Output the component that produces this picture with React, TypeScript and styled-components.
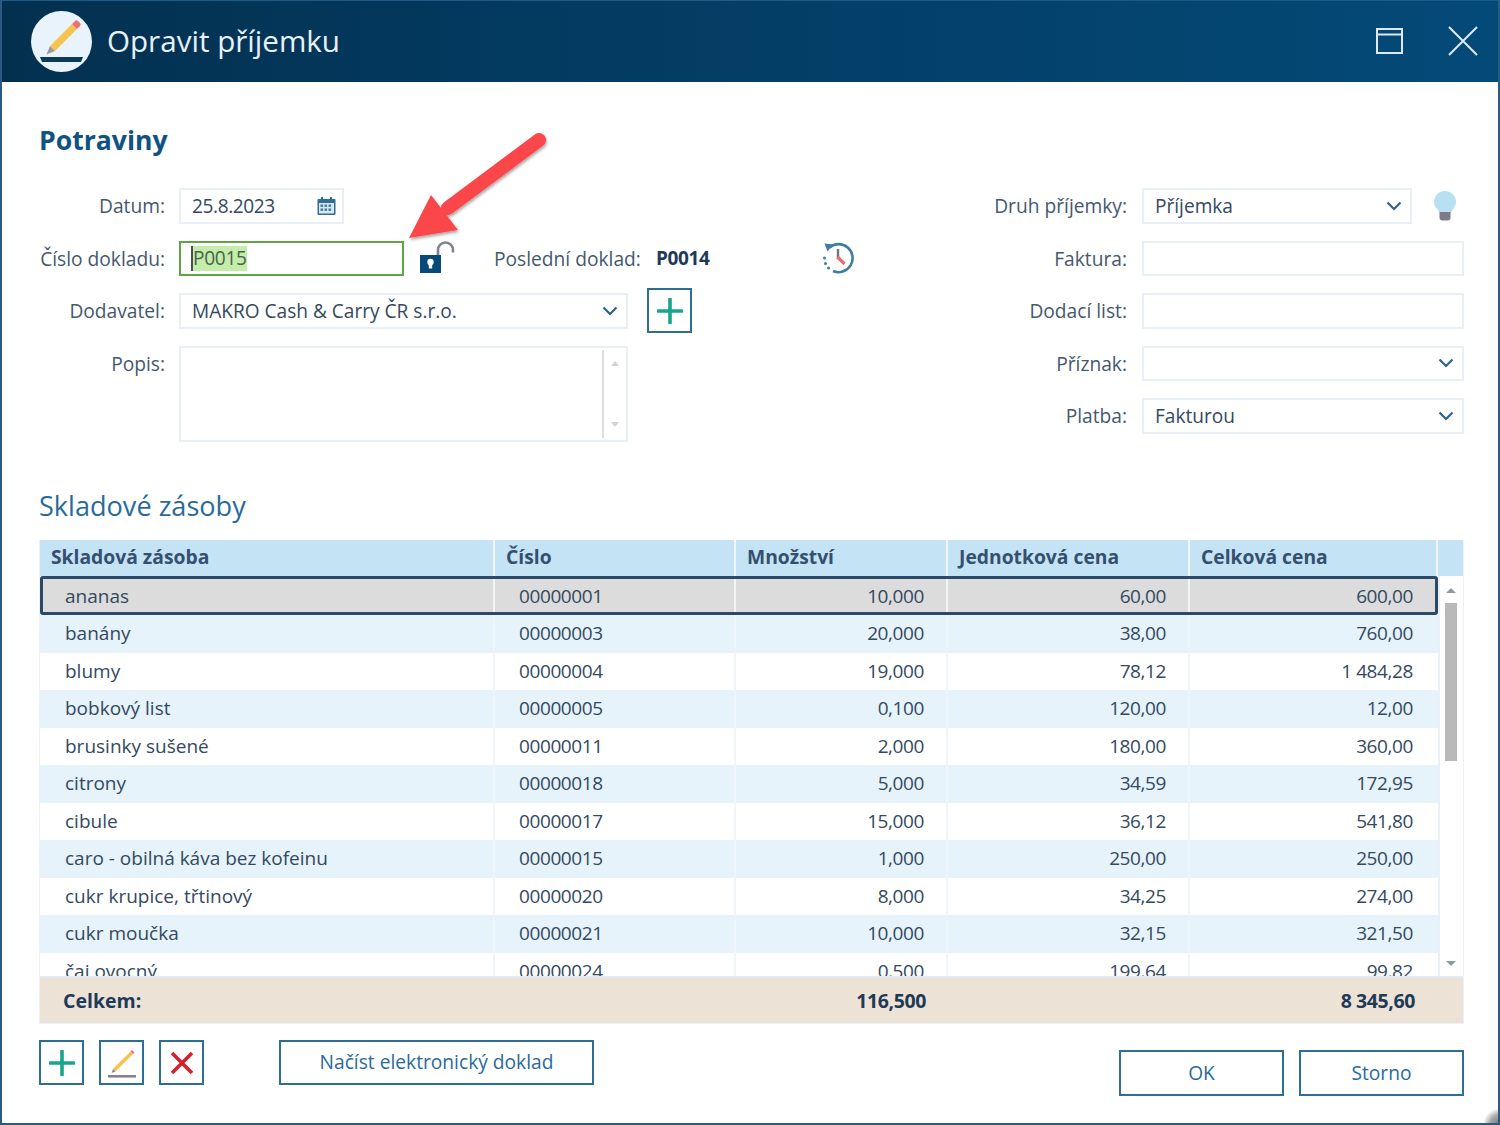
import React from "react";
import styled, { createGlobalStyle } from "styled-components";

const Global = createGlobalStyle`
  html, body { margin: 0; padding: 0; background: #fff; }
  * { box-sizing: border-box; }
  body { font-family: "Open Sans", "Noto Sans", sans-serif; color: #34495f; }
`;

const Win = styled.div`
  position: relative; width: 1500px; height: 1125px; overflow: hidden;
  border: solid #2b5b80; border-width: 0 2px 2px 2px; background: #fff;
  display: flex; flex-direction: column;
`;
const TitleBar = styled.header`
  height: 82px; margin: 0 -2px; flex: none; display: flex; align-items: center; padding: 0 12px 0 31px;
  background: linear-gradient(90deg, #03304f 0%, #033a60 35%, #044a78 100%);
  border-top: 1px solid #1d5a85;
`;
const Logo = styled.div`
  width: 61px; height: 61px; border-radius: 50%; background: #e9f3fb; flex: none; display: flex;
`;
const TitleText = styled.h1`
  margin: -2px 0 0 15px; font-size: 29.6px; font-weight: 400; color: #e8f1f8; flex: 1; line-height: 40px;
`;
const WinButton = styled.button`
  width: 50px; height: 50px; padding: 0; border: 0; background: none; display: flex;
  align-items: center; justify-content: center; margin-left: ${p => p.$gap ?? 23}px; margin-top: -2px;
`;
const Main = styled.main`
  flex: 1; display: flex; flex-direction: column; padding: 0 34px 0 37px; min-height: 0;
`;
const Heading = styled.h2`
  margin: 39px 0 29px 0; font-size: 26.6px; line-height: 38px; font-weight: 700; color: #0f5283;
`;
const FormArea = styled.div`
  display: flex; justify-content: space-between; height: 298px;
`;
const LeftForm = styled.div`
  display: grid; grid-template-columns: 126px 449px 64px auto; grid-auto-rows: min-content;
  column-gap: 14px; row-gap: 17px; align-content: start;
`;
const RightForm = styled.div`
  display: grid; grid-template-columns: 200px 322px; column-gap: 15px; row-gap: 17px;
  grid-auto-rows: 35.5px; align-content: start;
`;
const Label = styled.label`
  font-size: 19.2px; line-height: 36.5px; height: 35.5px; text-align: right; color: #44586e; white-space: nowrap;
`;
const Field = styled.div`
  height: 35.5px; border: 2px solid #e9eff9; background: #fff; display: flex; align-items: center;
  padding: 0 8px 0 11px; font-size: 19.1px; color: #34495f; width: ${p => p.$w ? p.$w + "px" : "100%"};
  justify-content: space-between; white-space: nowrap;
`;
const DateValue = styled.span`
  letter-spacing: -0.4px;
`;
const CalendarBox = styled.span`
  display: flex; margin-right: -2px;
`;
const FocusField = styled(Field)`
  border-color: #5fa544; width: 225px; justify-content: flex-start; position: relative;
`;
const Selected = styled.span`
  background: #c4eda9; color: #4b6150; border-left: 2px solid #44515c; line-height: 25px; height: 25px; display: block;
  letter-spacing: -0.3px; margin-left: -1px;
`;
const DateRow = styled.div`
  grid-column: 2 / 5; display: flex;
`;
const NumberRow = styled.div`
  grid-column: 2 / 5; display: flex; align-items: center; position: relative; height: 35.5px;
`;
const LockWrap = styled.span`
  display: flex; margin-left: 16px; flex: none;
`;
const LastLabel = styled.span`
  font-size: 19.2px; margin-left: 38px; color: #44586e; white-space: nowrap; width: 162px; flex: none;
`;
const LastValue = styled.strong`
  font-size: 19px; font-weight: 700; color: #1f3a57; width: 166px; flex: none; letter-spacing: -0.35px;
`;
const HistoryWrap = styled.span`
  display: flex; margin-left: -1px;
`;
const TextArea = styled.div`
  height: 96px; border: 2px solid #e9eff9; grid-column: 2; position: relative; display: flex; justify-content: flex-end;
`;
const AreaScroll = styled.div`
  width: 24px; margin: 2px 0; border-left: 2px solid #dddddd; position: relative;
`;
const MiniArrow = styled.i`
  position: absolute; left: 7px; width: 0; height: 0; border: 4.5px solid transparent;
  ${p => p.$up ? `top: 11px; border-top: 0; border-bottom: 5px solid #d2d2d2;` : `bottom: 11px; border-bottom: 0; border-top: 5px solid #d2d2d2;`}
`;
const IconButton = styled.button`
  width: 45px; height: 45px; border: 2px solid #2f6d99; background: #fff; padding: 0;
  display: flex; align-items: center; justify-content: center; flex: none;
`;
const LeftPlus = styled.div`
  grid-column: 3 / 5; height: 35.5px; display: flex; align-items: flex-start; margin-left: 5px; margin-top: -5px;
`;
const BulbRow = styled.div`
  display: flex; align-items: center; justify-content: space-between;
`;
const BulbBox = styled.span`
  display: flex; margin-right: 7px;
`;
const Sub = styled.h3`
  margin: 0 0 14px 0; font-size: 27.1px; line-height: 40px; font-weight: 400; color: #2a6a9a;
`;
const Table = styled.div`
  border: 1px solid #eaf1fa; border-top: 0; display: flex; flex-direction: column; height: 484px; width: 1425px;
`;
const HeadRow = styled.div`
  display: grid; grid-template-columns: 455px 241px 212px 242px 248px 1fr; height: 36px; background: #c4e3f5; flex: none;
`;
const HeadCell = styled.div`
  font-size: 19.3px; font-weight: 700; line-height: 33px; padding-left: 11px; color: #35506f;
  border-right: 2px solid #f0f6fb; white-space: nowrap;
  &:last-child { border-right: 0; padding: 0; }
`;
const BodyWrap = styled.div`
  flex: 1; min-height: 0; display: flex; overflow: hidden; border-bottom: 2px solid #e4eaf1;
`;
const Rows = styled.div`
  width: 1398px; flex: none; overflow: hidden;
`;
const Row = styled.div`
  display: grid; grid-template-columns: 455px 241px 212px 242px 248px; height: 37.5px;
  background: ${p => p.$sel ? "#dcdcdc" : p.$alt ? "#e6f3fb" : "#fff"};
  ${p => p.$sel ? `outline: 3px solid #2b4a68; outline-offset: -3px; border-radius: 3px; height: 39px;` : ""}
`;
const Cell = styled.div`
  font-size: 19px; line-height: ${p => p.$sel ? 40 : 37.5}px; color: #34495f; white-space: nowrap;
  border-right: 2px solid ${p => p.$sel ? "#f4f4f4" : "#f0f5fa"};
  text-align: ${p => p.$num ? "right" : "left"};
  letter-spacing: ${p => p.$digits ? "-0.4px" : "0"};
  padding: ${p => p.$num ? `0 ${p.$last ? 25 : 22}px 0 0` : `0 0 0 ${p.$digits ? 24 : 25}px`};
  &:last-child { border-right: 0; }
`;
const Scroll = styled.div`
  flex: 1; border-left: 2px solid #eaf0f8; position: relative; padding-top: 27px;
`;
const Thumb = styled.div`
  width: 12px; height: 158px; background: #b9b9b9; margin-left: 5px;
`;
const ScrollArrow = styled.i`
  position: absolute; left: 6px; width: 0; height: 0; border: 5px solid transparent;
  ${p => p.$up ? `top: 12px; border-top: 0; border-bottom: 5px solid #8e9aa6;` : `bottom: 10px; border-bottom: 0; border-top: 5px solid #8e9aa6;`}
`;
const Total = styled.div`
  display: grid; grid-template-columns: 455px 241px 212px 242px 248px 1fr; height: 45px; background: #ece3d6; flex: none;
`;
const TotalCell = styled.div`
  font-size: 19.5px; font-weight: 700; line-height: 45px; color: #1f3a57; white-space: nowrap;
  text-align: ${p => p.$num ? "right" : "left"};
  letter-spacing: ${p => p.$num ? "-0.4px" : "0"};
  padding: ${p => p.$num ? `0 ${p.$pr}px 0 0` : "0 0 0 23px"};
`;
const Footer = styled.footer`
  display: flex; align-items: flex-start; margin-top: 16px;
`;
const ToolGroup = styled.div`
  display: flex; gap: 15px;
`;
const LoadButton = styled.button`
  margin-left: 75px; width: 315px; height: 45px; border: 2px solid #2f6d99; background: #fff;
  font: 400 19.2px "Open Sans", sans-serif; color: #2a6a9a; line-height: 40px; padding: 0 0 1px;
`;
const ActionGroup = styled.div`
  margin-left: auto; display: flex; gap: 15px; margin-top: 10px;
`;
const ActionButton = styled.button`
  width: 165px; height: 46px; border: 2px solid #2f6d99; background: #fff;
  font: 400 19.2px "Open Sans", sans-serif; color: #2a6a9a; padding: 0 0 1px;
`;
const ArrowOverlay = styled.svg`
  position: absolute; left: 393px; top: 120px; pointer-events: none;
`;
const CornerShade = styled.div`
  position: absolute; right: -2px; bottom: -2px; width: 16px; height: 16px;
  background: radial-gradient(circle at 100% 100%, #6f6f6f 0%, #a9a9a9 45%, rgba(255,255,255,0) 75%);
`;

const Chevron = () => (
  <svg width="16" height="10" viewBox="0 0 16 10"><path d="M1.5 1.5 8 8l6.5-6.5" fill="none" stroke="#2f6288" strokeWidth="2.2" /></svg>
);
const Plus = () => (
  <svg width="26" height="26" viewBox="0 0 26 26"><path d="M13 1v24M1 13h24" stroke="#17a58c" strokeWidth="3.6" strokeLinecap="round" /></svg>
);
const Calendar = () => (
  <svg width="19" height="18" viewBox="0 0 19 18">
    <rect x="0.5" y="2" width="18" height="16" rx="1" fill="#2f6d99" />
    <rect x="2" y="6" width="15" height="10.5" fill="#d9e7f2" />
    <rect x="4" y="0" width="2" height="3.5" fill="#2f6d99" /><rect x="13" y="0" width="2" height="3.5" fill="#2f6d99" />
    {[3.5, 7.5, 11.5].map(x => [7.5, 11.5].map(y => <rect key={x + "-" + y} x={x} y={y} width="2.6" height="2.4" fill="#3f7aa4" />))}
  </svg>
);
const Lock = () => (
  <svg width="36" height="34" viewBox="0 0 36 34">
    <path d="M18 16V9a7.5 7.5 0 0 1 15 0v2.5" fill="none" stroke="#877f90" strokeWidth="2.6" />
    <rect x="0" y="14" width="21" height="18" fill="#06497a" />
    <circle cx="10.500" cy="21" r="3.2" fill="#fff" /><rect x="8.800" y="21" width="3.4" height="6.5" fill="#fff" />
  </svg>
);
const History = () => (
  <svg width="34" height="34" viewBox="0 0 34 34">
    <path d="M8.5 6.5A14 14 0 1 1 12 30" fill="none" stroke="#3f7ba5" strokeWidth="2.6" />
    <path d="M3.5 2.5 12 3.5 6.5 10.5Z" fill="#3f7ba5" />
    <circle cx="3.5" cy="17" r="1.5" fill="#3f7ba5" /><circle cx="4.5" cy="22.5" r="1.5" fill="#3f7ba5" /><circle cx="7.5" cy="27" r="1.5" fill="#3f7ba5" />
    <path d="M17 8v10" stroke="#6d7480" strokeWidth="2.4" /><path d="M16.5 16l7 7" stroke="#ed6a6e" strokeWidth="3.2" />
  </svg>
);
const Bulb = () => (
  <svg width="24" height="32" viewBox="0 0 24 32">
    <path d="M12 1a11 11 0 0 1 11 11c0 4.5-3.5 7-5 11H6.500C5 19 1 16.500 1 12A11 11 0 0 1 12 1Z" fill="#b8e0f3" />
    <path d="M6.500 22h11v5.500a3 3 0 0 1-3 3h-5a3 3 0 0 1-3-3Z" fill="#7d7a86" />
  </svg>
);
const PencilMark = () => (
  <svg width="30" height="30" viewBox="0 0 30 30">
    <path d="M6 21 23.500 3.500l2.500 2.500L8.500 23.500Z" fill="#f7c04f" />
    <path d="M23.500 3.500l1.500-1.500 2.500 2.500L26 6Z" fill="#ee6f74" />
    <path d="M6 21l-1.500 4 4-1.500Z" fill="#8a8a8a" />
    <rect x="1" y="27" width="28" height="2.600" fill="#87808f" />
  </svg>
);

const rows: [string, string, string, string, string][] = [
  ["ananas", "00000001", "10,000", "60,00", "600,00"],
  ["banány", "00000003", "20,000", "38,00", "760,00"],
  ["blumy", "00000004", "19,000", "78,12", "1 484,28"],
  ["bobkový list", "00000005", "0,100", "120,00", "12,00"],
  ["brusinky sušené", "00000011", "2,000", "180,00", "360,00"],
  ["citrony", "00000018", "5,000", "34,59", "172,95"],
  ["cibule", "00000017", "15,000", "36,12", "541,80"],
  ["caro - obilná káva bez kofeinu", "00000015", "1,000", "250,00", "250,00"],
  ["cukr krupice, třtinový", "00000020", "8,000", "34,25", "274,00"],
  ["cukr moučka", "00000021", "10,000", "32,15", "321,50"],
  ["čaj ovocný", "00000024", "0,500", "199,64", "99,82"],
];

export default function App() {
  return (
    <Win>
      <Global />
      <TitleBar>
        <Logo>
          <svg width="61" height="61" viewBox="0 0 61 61">
            <path d="M19 35 41 13l5 5-22 22Z" fill="#f9c34f" />
            <path d="M41 13l3-3a2 2 0 0 1 3 0l2 2a2 2 0 0 1 0 3l-3 3Z" fill="#ec7078" />
            <path d="M19 35l-3.500 8.500L24 40Z" fill="#9a9a9a" />
            <path d="M9 46h43l-2 5H11Z" fill="#0d3a57" />
          </svg>
        </Logo>
        <TitleText>Opravit příjemku</TitleText>
        <WinButton aria-label="Maximalizovat">
          <svg width="28" height="28" viewBox="0 0 28 28" fill="none" stroke="#dfe9f1" strokeWidth="2"><rect x="1" y="2" width="25" height="24" /><path d="M1 7.500h25" /></svg>
        </WinButton>
        <WinButton $gap={23} aria-label="Zavřít">
          <svg width="30" height="30" viewBox="0 0 30 30" stroke="#dfe9f1" strokeWidth="2"><path d="M1 1l28 28M29 1 1 29" /></svg>
        </WinButton>
      </TitleBar>
      <Main>
        <Heading>Potraviny</Heading>
        <FormArea>
          <LeftForm>
            <Label>Datum:</Label>
            <DateRow><Field $w={165}><DateValue>25.8.2023</DateValue><CalendarBox><Calendar /></CalendarBox></Field></DateRow>
            <Label>Číslo dokladu:</Label>
            <NumberRow>
              <FocusField><Selected>P0015</Selected></FocusField>
              <LockWrap><Lock /></LockWrap>
              <LastLabel>Poslední doklad:</LastLabel>
              <LastValue>P0014</LastValue>
              <HistoryWrap><History /></HistoryWrap>
            </NumberRow>
            <Label>Dodavatel:</Label>
            <Field>MAKRO Cash &amp; Carry ČR s.r.o.<Chevron /></Field>
            <LeftPlus><IconButton aria-label="Přidat dodavatele"><Plus /></IconButton></LeftPlus>
            <Label>Popis:</Label>
            <TextArea><AreaScroll><MiniArrow $up /><MiniArrow /></AreaScroll></TextArea>
          </LeftForm>
          <RightForm>
            <Label>Druh příjemky:</Label>
            <BulbRow><Field $w={270}>Příjemka<Chevron /></Field><BulbBox><Bulb /></BulbBox></BulbRow>
            <Label>Faktura:</Label>
            <Field />
            <Label>Dodací list:</Label>
            <Field />
            <Label>Příznak:</Label>
            <Field><span /><Chevron /></Field>
            <Label>Platba:</Label>
            <Field>Fakturou<Chevron /></Field>
          </RightForm>
        </FormArea>
        <Sub>Skladové zásoby</Sub>
        <Table>
          <HeadRow>
            {["Skladová zásoba", "Číslo", "Množství", "Jednotková cena", "Celková cena", ""].map((h, i) => <HeadCell key={i}>{h}</HeadCell>)}
          </HeadRow>
          <BodyWrap>
            <Rows>
              {rows.map((r, i) => (
                <Row key={r[1]} $sel={i === 0} $alt={i % 2 === 1}>
                  {r.map((c, j) => <Cell key={j} $num={j >= 2} $digits={j >= 1} $last={j === 4} $sel={i === 0}>{c}</Cell>)}
                </Row>
              ))}
            </Rows>
            <Scroll><ScrollArrow $up /><Thumb /><ScrollArrow /></Scroll>
          </BodyWrap>
          <Total>
            <TotalCell>Celkem:</TotalCell>
            <TotalCell />
            <TotalCell $num $pr={22}>116,500</TotalCell>
            <TotalCell />
            <TotalCell $num $pr={23}>8 345,60</TotalCell>
            <TotalCell />
          </Total>
        </Table>
        <Footer>
          <ToolGroup>
            <IconButton aria-label="Přidat"><Plus /></IconButton>
            <IconButton aria-label="Upravit"><PencilMark /></IconButton>
            <IconButton aria-label="Smazat">
              <svg width="24" height="24" viewBox="0 0 24 24"><path d="M2 2l20 20M22 2 2 22" stroke="#d3222c" strokeWidth="3.6" /></svg>
            </IconButton>
          </ToolGroup>
          <LoadButton>Načíst elektronický doklad</LoadButton>
          <ActionGroup>
            <ActionButton>OK</ActionButton>
            <ActionButton>Storno</ActionButton>
          </ActionGroup>
        </Footer>
      </Main>
      <ArrowOverlay width="165" height="130" viewBox="0 0 165 130">
        <defs><filter id="s" x="-20%" y="-20%" width="140%" height="140%"><feDropShadow dx="1" dy="2" stdDeviation="1.500" floodColor="#000" floodOpacity="0.35" /></filter></defs>
        <g filter="url(#s)" fill="#fb4649">
          <path d="M144 20 53 88" stroke="#fb4649" strokeWidth="14" strokeLinecap="round" fill="none" />
          <path d="M14 118 36 75 63 110Z" />
        </g>
      </ArrowOverlay>
      <CornerShade />
    </Win>
  );
}
